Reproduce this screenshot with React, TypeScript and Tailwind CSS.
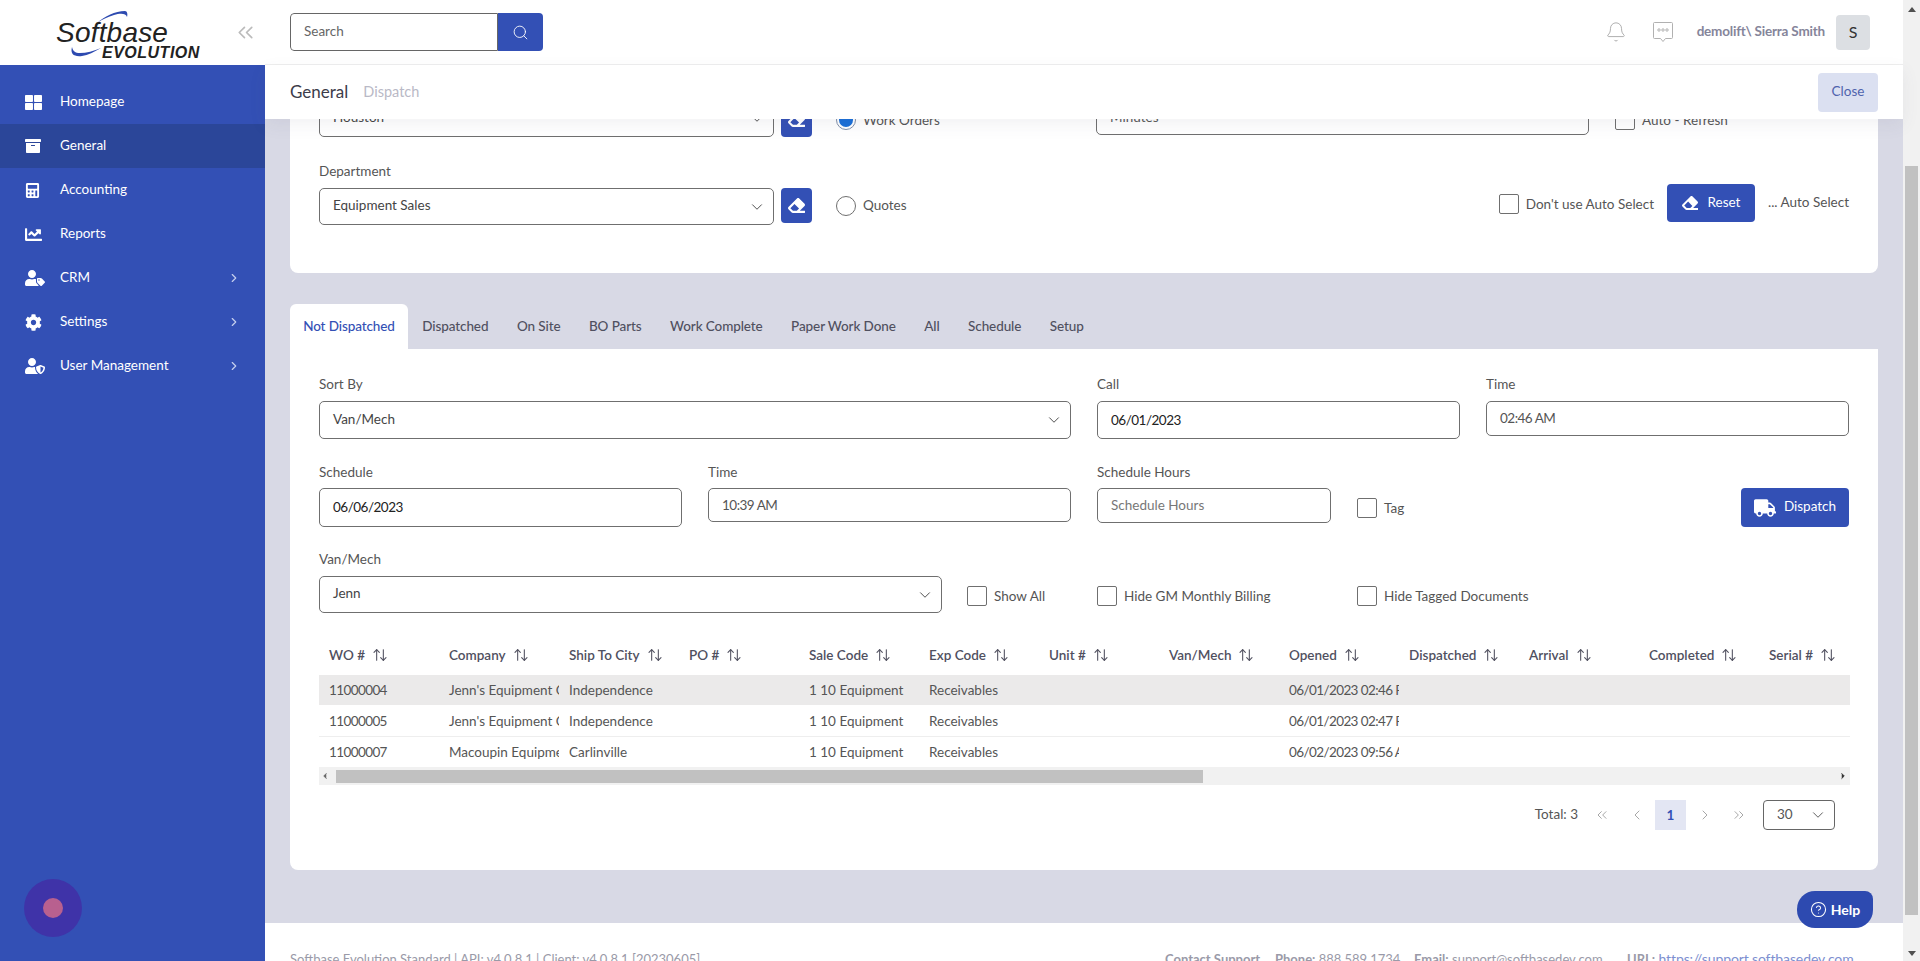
import { ArrowUpDown, Bell, ChevronDown, ChevronLeft, ChevronRight, ChevronsLeft, ChevronsRight, CircleHelp, Search } from "lucide-react";
import { FaArchive, FaCalculator, FaChartLine, FaCog, FaEraser, FaThLarge, FaTruck, FaUserShield, FaUserTag } from "react-icons/fa";
import type { ReactNode } from "react";

const navItems = [
  { label: "Homepage", icon: <FaThLarge size={17} /> },
  { label: "General", icon: <FaArchive size={16} />, active: true },
  { label: "Accounting", icon: <FaCalculator size={15} /> },
  { label: "Reports", icon: <FaChartLine size={17} /> },
  { label: "CRM", icon: <FaUserTag size={20} />, more: true },
  { label: "Settings", icon: <FaCog size={17} />, more: true },
  { label: "User Management", icon: <FaUserShield size={20} />, more: true },
];

const tabs = ["Dispatched", "On Site", "BO Parts", "Work Complete", "Paper Work Done", "All", "Schedule", "Setup"];

const columns = ["WO #", "Company", "Ship To City", "PO #", "Sale Code", "Exp Code", "Unit #", "Van/Mech", "Opened", "Dispatched", "Arrival", "Completed", "Serial #"];

const rows = [
  { cells: ["11000004", "Jenn's Equipment Co", "Independence", "", "1 10 Equipment", "Receivables", "", "", "06/01/2023 02:46 PM"], cls: "h-[30px] bg-[#ebeaea] pt-[1px]" },
  { cells: ["11000005", "Jenn's Equipment Co", "Independence", "", "1 10 Equipment", "Receivables", "", "", "06/01/2023 02:47 PM"], cls: "h-[32px] border-b border-[#eeeeee] pt-[1px]" },
  { cells: ["11000007", "Macoupin Equipment", "Carlinville", "", "1 10 Equipment", "Receivables", "", "", "06/02/2023 09:56 AM"], cls: "h-[30px]" },
];

const Logo = () => (
  <div className="relative h-[65px] w-[265px] shrink-0">
    <svg className="absolute left-[60px] top-[5px]" width="80" height="55" viewBox="0 0 80 55">
      <path d="M37 18 C45 11 55 6 65 6 C67 6 68 9 67 12 C66 8 60 8 54 10 C48 12 43 14 37 18 Z" fill="#2d4ab0" />
      <path d="M12 42 C10 49 14 52 22 51 C28 50 34 47 41 43 C34 46 26 48 20 48 C15 48 13 46 12 42 Z" fill="#2d4ab0" />
    </svg>
    <span className="absolute left-[56px] top-[17px] font-['Liberation_Sans',sans-serif] text-[28px] italic leading-[32px] tracking-[0.2px] text-[#222222]">
      Softbase
    </span>
    <span className="absolute left-[102px] top-[44px] font-['Liberation_Sans',sans-serif] text-[16px] font-bold italic leading-[18px] tracking-[0.5px] text-[#222222]">
      EVOLUTION
    </span>
    <ChevronsLeft className="absolute left-[233px] top-[20px] text-[#bbbbbb]" size={25} strokeWidth={1.6} />
  </div>
);

const Sidebar = () => (
  <aside className="flex w-[265px] shrink-0 flex-col">
    <Logo />
    <nav className="relative flex-1 bg-[#3350b5] pt-[15px] text-[13.5px] text-white">
      {navItems.map((item) => (
        <div key={item.label} className={`flex h-[44px] items-center pl-[25px] pr-[24px] ${item.active ? "bg-[#2b4699]" : ""}`}>
          <span className="flex w-[35px] shrink-0 items-center">{item.icon}</span>
          <span className="flex-1 pb-[2px]">{item.label}</span>
          {item.more && <ChevronRight className="text-[#c5cfee]" size={14} />}
        </div>
      ))}
      <div className="absolute left-[24px] top-[814px] flex h-[58px] w-[58px] items-center justify-center rounded-full bg-[#3f33a8]">
        <div className="h-[20px] w-[20px] rounded-full bg-[#b8608f]" />
      </div>
    </nav>
  </aside>
);

const Header = () => (
  <header className="flex h-[65px] shrink-0 items-center border-b border-[#eeeeee] bg-white pl-[25px] pr-[33px]">
    <div className="flex h-[38px] w-[253px] overflow-hidden rounded-[4px]">
      <input placeholder="Search" className="min-w-0 flex-1 rounded-l-[4px] border border-[#666666] px-[13px] pb-[1px] text-[13.5px] outline-none placeholder:text-[#666666]" />
      <button className="flex w-[45px] items-center justify-center bg-[#3350b5] text-white">
        <Search size={17} strokeWidth={1.25} />
      </button>
    </div>
    <Bell className="ml-auto text-[#a8a8a8]" size={22} strokeWidth={1} />
    <svg className="ml-[25px] text-[#a8a8a8]" width="22" height="24" viewBox="0 0 22 24" fill="none" stroke="currentColor" strokeWidth="0.9">
      <path d="M2.5 2.5h17a1 1 0 0 1 1 1v14a1 1 0 0 1-1 1h-6l-2.5 3-2.5-3h-6a1 1 0 0 1-1-1v-14a1 1 0 0 1 1-1z" />
      <circle cx="7" cy="10" r="1.2" />
      <circle cx="11" cy="10" r="1.2" />
      <circle cx="15" cy="10" r="1.2" />
    </svg>
    <span className="ml-[23px] pb-[2px] text-[13.5px] font-bold tracking-[-0.2px] text-[#85859a]">demolift\ Sierra Smith</span>
    <div className="ml-[11px] flex h-[35px] w-[34px] items-center justify-center rounded-[4px] bg-[#dcdfe3] text-[16px] text-[#333333]">S</div>
  </header>
);

const SubHeader = () => (
  <div className="relative z-10 flex h-[54px] shrink-0 items-center bg-white pl-[25px] pr-[25px] shadow-[0_6px_16px_rgba(90,90,120,0.08)]">
    <span className="text-[17px] text-[#3c3c4a]">General</span>
    <span className="ml-[15px] text-[14.5px] text-[#b9b9c6]">Dispatch</span>
    <button className="ml-auto h-[39px] w-[60px] rounded-[4px] bg-[#dbe0f1] pb-[2px] text-[13.5px] text-[#4f63ad]">Close</button>
  </div>
);

const Select = ({ value, className }: { value: string; className: string }) => (
  <div className={`flex items-center justify-between rounded-[5px] border border-[#6f6f6f] bg-white pl-[13px] pr-[7px] text-[13.5px] text-[#444444] ${className}`}>
    <span className="pb-[2px]">{value}</span>
    <ChevronDown size={18} strokeWidth={1.25} />
  </div>
);

const Label = ({ text, gap = "mb-[8px]" }: { text: string; gap?: string }) => (
  <div className={`h-[18px] text-[13.5px] leading-[18px] text-[#555555] ${gap}`}>{text}</div>
);

const Field = ({ label, children, className = "" }: { label: string; children: ReactNode; className?: string }) => (
  <div className={className}>
    <Label text={label} />
    {children}
  </div>
);

const TextBox = ({ value, className, dark, muted }: { value: string; className: string; dark?: boolean; muted?: boolean }) => (
  <div className={`flex items-center rounded-[5px] border border-[#6f6f6f] bg-white px-[13px] text-[13.5px] ${/^\d/.test(value) ? "tracking-[-0.5px]" : ""} ${dark ? "text-[#222222]" : muted ? "text-[#777777]" : "text-[#555555]"} ${className}`}>
    {value}
  </div>
);

const Check = ({ label, className = "" }: { label: string; className?: string }) => (
  <label className={`flex items-center text-[13.5px] text-[#555555] ${className}`}>
    <span className="mr-[7px] h-[20px] w-[20px] shrink-0 rounded-[2px] border border-[#6f6f6f] bg-white" />
    {label}
  </label>
);

const EraserButton = () => (
  <button className="ml-[7px] flex h-[35px] w-[31px] shrink-0 items-center justify-center rounded-[4px] bg-[#3350b5] text-white">
    <FaEraser size={17} />
  </button>
);

const FilterCard = () => (
  <section className="h-[154px] overflow-hidden rounded-b-[8px] bg-white px-[29px]">
    <div className="-mt-[19px] flex items-start">
      <Select value="Houston" className="h-[37px] w-[455px]" />
      <div className="mt-[2px]">
        <EraserButton />
      </div>
      <div className="ml-[24px] mt-[10px] flex w-[260px] items-center text-[13.5px] text-[#555555]">
        <span className="mr-[7px] flex h-[20px] w-[20px] items-center justify-center rounded-full border border-[#7f8fa8]">
          <span className="h-[14px] w-[14px] rounded-full bg-[#1a6fd8]" />
        </span>
        Work Orders
      </div>
      <TextBox value="Minutes" className="h-[35px] w-[493px]" />
      <Check label="Auto - Refresh" className="ml-[26px] mt-[10px]" />
    </div>
    <div className="mt-[25px] flex items-start">
      <Field label="Department" className="w-[455px]">
        <Select value="Equipment Sales" className="h-[37px]" />
      </Field>
      <div className="mt-[26px]">
        <EraserButton />
      </div>
      <div className="ml-[24px] mt-[33px] flex items-center text-[13.5px] text-[#555555]">
        <span className="mr-[7px] h-[20px] w-[20px] rounded-full border border-[#6f6f6f]" />
        <span className="pb-[1px]">Quotes</span>
      </div>
      <div className="ml-auto mt-[22px] flex items-center">
        <Check label="Don't use Auto Select" className="mt-[2px]" />
        <button className="ml-[13px] flex h-[38px] w-[88px] items-center justify-center gap-[10px] rounded-[4px] bg-[#3350b5] text-[13.5px] text-white">
          <FaEraser size={16} />
          <span className="pb-[2px]">Reset</span>
        </button>
        <span className="ml-[13px] pb-[2px] text-[13.5px] text-[#555555]">... Auto Select</span>
      </div>
    </div>
  </section>
);

const TabBar = () => (
  <div className="mt-[31px] flex h-[45px] items-stretch text-[13.5px] font-medium tracking-[-0.1px] text-[#50505f]">
    <div className="flex w-[118px] items-center justify-center rounded-t-[6px] bg-white pb-[1px] text-[#3350b5]">Not Dispatched</div>
    {tabs.map((tab) => (
      <div key={tab} className="flex items-center px-[14.25px] pb-[1px]">{tab}</div>
    ))}
  </div>
);

const DataTable = () => (
  <div className="mt-[22px] w-[1531px] overflow-hidden">
    <div className="flex h-[40px] w-[1800px] items-center text-[13.5px] font-semibold text-[#50505f]">
      {columns.map((col) => (
        <div key={col} className="flex w-[120px] items-center gap-[7px] pl-[10px]">
          {col}
          <ArrowUpDown size={16} strokeWidth={1.6} />
        </div>
      ))}
    </div>
    {rows.map((row) => (
      <div key={row.cells[0]} className={`flex w-[1800px] items-center text-[13.5px] text-[#555555] ${row.cls}`}>
        {row.cells.map((cell, i) => (
          <div key={i} className={`w-[120px] shrink-0 overflow-hidden whitespace-nowrap pl-[10px] ${/^\d{2}/.test(cell) ? "tracking-[-0.6px]" : ""}`}>{cell}</div>
        ))}
      </div>
    ))}
    <div className="flex h-[18px] items-center bg-[#f1f1f1]">
      <ChevronLeft className="ml-[1px] text-[#666666]" size={10} fill="#666666" />
      <div className="ml-[6px] h-[13px] w-[867px] bg-[#c1c1c1]" />
      <ChevronRight className="ml-auto mr-[2px] text-[#333333]" size={10} fill="#333333" />
    </div>
  </div>
);

const Pagination = () => (
  <div className="mt-[15px] flex h-[30px] items-center justify-end pr-[14px] text-[13.5px] text-[#555555]">
    <span className="pb-[1px]">Total: 3</span>
    <ChevronsLeft className="ml-[16px] text-[#a0a0a0]" size={16} strokeWidth={1.4} />
    <ChevronLeft className="ml-[19px] text-[#a0a0a0]" size={16} strokeWidth={1.4} />
    <span className="ml-[10px] flex h-[30px] w-[31px] items-center justify-center bg-[#e3e6f3] font-bold text-[#3350b5]">1</span>
    <ChevronRight className="ml-[11px] text-[#a0a0a0]" size={16} strokeWidth={1.4} />
    <ChevronsRight className="ml-[18px] text-[#a0a0a0]" size={16} strokeWidth={1.4} />
    <div className="ml-[16px] flex h-[30px] w-[72px] items-center justify-between rounded-[4px] border border-[#666666] pl-[13px] pr-[7px]">
      <span className="pb-[2px]">30</span>
      <ChevronDown size={18} strokeWidth={1.25} />
    </div>
  </div>
);

const DispatchCard = () => (
  <section className="h-[521px] rounded-b-[8px] bg-white px-[29px] pt-[26px]">
    <div className="flex gap-[26px]">
      <Field label="Sort By" className="w-[752px]">
        <Select value="Van/Mech" className="h-[38px]" />
      </Field>
      <Field label="Call" className="w-[363px]">
        <TextBox value="06/01/2023" dark className="h-[38px]" />
      </Field>
      <Field label="Time" className="w-[363px]">
        <TextBox value="02:46 AM" className="h-[35px]" />
      </Field>
    </div>
    <div className="mt-[24px] flex items-start gap-[26px]">
      <div className="w-[363px]">
        <Label text="Schedule" gap="mb-[7px]" />
        <TextBox value="06/06/2023" dark className="h-[39px]" />
      </div>
      <div className="w-[363px]">
        <Label text="Time" gap="mb-[7px]" />
        <TextBox value="10:39 AM" className="h-[34px]" />
      </div>
      <div className="w-[234px]">
        <Label text="Schedule Hours" gap="mb-[7px]" />
        <TextBox value="Schedule Hours" muted className="h-[35px]" />
      </div>
      <Check label="Tag" className="mt-[35px]" />
      <button className="ml-auto mt-[25px] flex h-[39px] w-[108px] items-center justify-center gap-[8px] rounded-[4px] bg-[#3350b5] text-[13.5px] text-white">
        <FaTruck size={22} />
        <span className="pb-[2px]">Dispatch</span>
      </button>
    </div>
    <div className="mt-[23px] flex items-start">
      <Field label="Van/Mech" className="w-[623px]">
        <Select value="Jenn" className="h-[37px]" />
      </Field>
      <Check label="Show All" className="ml-[25px] mt-[36px] w-[130px]" />
      <Check label="Hide GM Monthly Billing" className="mt-[36px] w-[260px]" />
      <Check label="Hide Tagged Documents" className="mt-[36px]" />
    </div>
    <DataTable />
    <Pagination />
  </section>
);

const Footer = () => (
  <footer className="flex h-[38px] shrink-0 items-start justify-between overflow-hidden whitespace-nowrap bg-white pl-[25px] pr-[52px] pt-[27px] text-[13px] leading-[18px] text-[#9a9aa8]">
    <span>Softbase Evolution Standard | API: v4.0.8.1 | Client: v4.0.8.1 [20230605]</span>
    <span className="flex">
      <b className="w-[96px] font-bold">Contact Support</b>
      <span className="ml-[14px] w-[123px]"><b className="font-bold">Phone:</b> 888.589.1734</span>
      <span className="ml-[16px] w-[196px]"><b className="font-bold">Email:</b> support@softbasedev.com</span>
      <span className="ml-[17px] w-[224px]"><b className="font-bold">URL:</b> <span className="text-[14px] tracking-[-0.1px] text-[#7d8fd0]">https://support.softbasedev.com</span></span>
    </span>
  </footer>
);

const PageScrollbar = () => (
  <div className="flex w-[17px] shrink-0 flex-col bg-[#f1f1f1]">
    <div className="flex h-[16px] items-center justify-center pt-[2px]">
      <div className="h-0 w-0 border-x-[4px] border-b-[5px] border-x-transparent border-b-[#505050]" />
    </div>
    <div className="ml-[2px] mt-[150px] h-[749px] w-[13px] bg-[#c1c1c1]" />
    <div className="mt-auto flex h-[16px] items-center justify-center">
      <div className="h-0 w-0 border-x-[4px] border-t-[5px] border-x-transparent border-t-[#505050]" />
    </div>
  </div>
);

export default function App() {
  return (
    <div className="relative flex h-[961px] w-[1920px] overflow-hidden bg-white font-['Lato',sans-serif]">
      <Sidebar />
      <main className="flex min-w-0 flex-1 flex-col">
        <Header />
        <SubHeader />
        <div className="min-h-0 flex-1 overflow-hidden bg-[#d8d9e5] px-[25px]">
          <FilterCard />
          <TabBar />
          <DispatchCard />
        </div>
        <Footer />
      </main>
      <PageScrollbar />
      <button className="absolute left-[1797px] top-[891px] flex h-[37px] w-[76px] items-center justify-center gap-[4px] rounded-[18px] rounded-tr-[8px] bg-[#2d4ab0] text-[14px] font-bold text-white">
        <CircleHelp size={17} strokeWidth={1.5} />
        Help
      </button>
    </div>
  );
}
